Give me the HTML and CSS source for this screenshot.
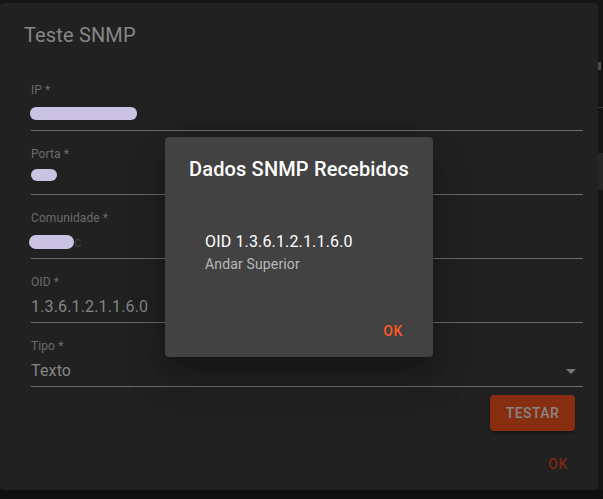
FILE: index.html
```html
<!DOCTYPE html>
<html lang="pt">
<head>
<meta charset="utf-8">
<link rel="stylesheet" href="styles.css">
<title>Teste SNMP</title>
</head>
<body>
<div class="screen">
  <section class="dialog">
    <h2 class="dialog-title">Teste SNMP</h2>
    <div class="form">
      <div class="field">
        <label class="field-label">IP *</label>
        <div class="field-value"><span class="mask mask-ip"></span></div>
      </div>
      <div class="field">
        <label class="field-label">Porta *</label>
        <div class="field-value"><span class="mask mask-port"></span></div>
      </div>
      <div class="field">
        <label class="field-label">Comunidade *</label>
        <div class="field-value"><span class="mask mask-comm"></span><span class="peek">c</span></div>
      </div>
      <div class="field">
        <label class="field-label">OID *</label>
        <div class="field-value">1.3.6.1.2.1.1.6.0</div>
      </div>
      <div class="field field-select">
        <label class="field-label">Tipo *</label>
        <div class="field-value">Texto<span class="caret"></span></div>
      </div>
      <div class="form-actions">
        <button class="btn-test">TESTAR</button>
      </div>
    </div>
    <div class="dialog-actions">
      <button class="btn-text btn-dim">OK</button>
    </div>

    <div class="modal">
      <h2 class="modal-title">Dados SNMP Recebidos</h2>
      <div class="modal-content">
        <div class="list-item">
          <div class="primary">OID 1.3.6.1.2.1.1.6.0</div>
          <div class="secondary">Andar Superior</div>
        </div>
      </div>
      <div class="modal-actions">
        <button class="btn-text btn-ok">OK</button>
      </div>
    </div>
  </section>
  <aside class="edge">
    <span class="edge-glyph"></span>
    <span class="edge-line"></span>
    <span class="edge-block"></span>
  </aside>
</div>
</body>
</html>
```

FILE: styles.css
```css
* { box-sizing: border-box; }
html, body { margin: 0; padding: 0; }
body {
  background: #121212;
  font-family: Roboto, "Noto Sans", "Liberation Sans", sans-serif;
  width: 603px;
  height: 499px;
  overflow: hidden;
}
.screen {
  display: flex;
  align-items: flex-start;
  padding-top: 3px;
  background: linear-gradient(#151515 0, #151515 490px, #0f0f0f 490px);
  height: 499px;
}
.dialog {
  position: relative;
  width: 598px;
  height: 487px;
  background: #212121;
  border-radius: 4px;
  padding: 16px 0 0 0;
  display: flex;
  flex-direction: column;
  flex-shrink: 0;
}
.dialog-title {
  margin: 0;
  padding: 0 24px;
  font-size: 20px;
  line-height: 32px;
  font-weight: 400;
  letter-spacing: 0.15px;
  color: #868686;
}
.form {
  margin: 16px 15px 0 31px;
  display: flex;
  flex-direction: column;
}
.field {
  height: 64px;
  padding-top: 16px;
  border-bottom: 1px solid #6b6b6b;
  display: flex;
  flex-direction: column;
}
.field-label {
  font-size: 12px;
  line-height: 14px;
  color: #6c6c6c;
  letter-spacing: 0.1px;
}
.field-value {
  margin-top: 8px;
  height: 20px;
  font-size: 16px;
  line-height: 20px;
  letter-spacing: 0.15px;
  color: #858585;
  display: flex;
  align-items: flex-start;
  position: relative;
}
.mask {
  display: inline-block;
  background: #cbc3e4;
  border-radius: 6px;
  margin-top: 2px;
  height: 13px;
}
.mask-ip { width: 107px; margin-left: -1px; }
.mask-port { width: 26px; margin-top: 0; height: 12px; }
.mask-comm { width: 45px; margin-left: -2px; height: 14px; border-radius: 7px; }
.peek { color: #3f3f3f; font-size: 14px; line-height: 16px; margin-top: 1px; }
.field-select .field-value { justify-content: space-between; }
.caret {
  width: 0; height: 0;
  border-left: 5px solid transparent;
  border-right: 5px solid transparent;
  border-top: 5px solid #777;
  margin: 8px 7px 0 0;
}
.form-actions {
  display: flex;
  justify-content: flex-end;
  margin-top: 8px;
  padding-right: 8px;
}
.btn-test {
  width: 85px;
  height: 36px;
  border: none;
  border-radius: 4px;
  background: #872e11;
  color: #878787;
  font-family: inherit;
  font-size: 14px;
  font-weight: 500;
  letter-spacing: 0.4px;
  box-shadow: 0 2px 3px rgba(0,0,0,0.35);
  padding: 0;
}
.dialog-actions {
  margin-top: auto;
  padding: 8px;
  display: flex;
  justify-content: flex-end;
}
.btn-text {
  min-width: 64px;
  height: 36px;
  border: none;
  background: transparent;
  font-family: inherit;
  font-size: 14px;
  font-weight: 500;
  letter-spacing: 0.4px;
  padding: 0 8px;
}
.btn-dim { color: #7e2810; }
.btn-ok { color: #ff5722; }

.modal {
  position: absolute;
  left: 165px;
  top: 134px;
  width: 268px;
  height: 220px;
  background: #424242;
  border-radius: 4px;
  display: flex;
  flex-direction: column;
  box-shadow: 0 11px 15px -7px rgba(0,0,0,0.2), 0 24px 38px 3px rgba(0,0,0,0.14), 0 9px 46px 8px rgba(0,0,0,0.12);
}
.modal-title {
  margin: 0;
  padding: 16px 24px 0 24px;
  font-size: 20px;
  line-height: 32px;
  font-weight: 500;
  letter-spacing: 0.15px;
  color: #ffffff;
  white-space: nowrap;
}
.modal-content {
  padding: 47px 24px 0 24px;
}
.list-item {
  padding-left: 16px;
}
.primary {
  font-size: 16px;
  line-height: 20px;
  letter-spacing: 0.15px;
  color: #ffffff;
}
.secondary {
  margin-top: 2px;
  font-size: 14px;
  line-height: 20px;
  letter-spacing: 0.15px;
  color: #b8b8b8;
}
.modal-actions {
  margin-top: auto;
  padding: 8px;
  display: flex;
  justify-content: flex-end;
}

.edge {
  width: 5px;
  display: flex;
  flex-direction: column;
  padding-top: 59px;
}
.edge-glyph {
  width: 3px; height: 8px;
  background: #4a4a4a;
}
.edge-line {
  margin-top: 37px;
  height: 1px;
  background: #3a3a3a;
}
.edge-block {
  margin-top: 45px;
  height: 37px;
  background: #262626;
}
```
